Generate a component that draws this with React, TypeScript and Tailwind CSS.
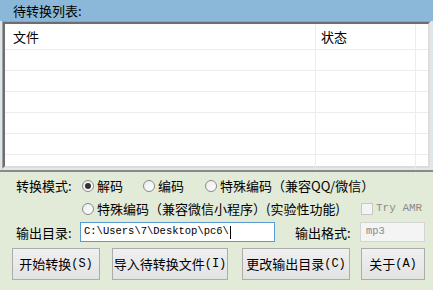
import React from "react";

const cjk = { fontFamily: '"Noto Sans CJK SC", "Noto Sans", sans-serif' };
const mono = { fontFamily: '"Liberation Mono", "DejaVu Sans Mono", monospace' };

function Radio({ checked, label }: { checked?: boolean; label: string }) {
  return (
    <div className="flex items-center gap-[3px] whitespace-nowrap">
      <span className="flex h-[12px] w-[12px] items-center justify-center rounded-full border border-[#8a8a8a] bg-gradient-to-br from-[#ececec] to-white">
        {checked && <span className="h-[6px] w-[6px] rounded-full bg-[#333]" />}
      </span>
      <span className="text-[13px] leading-none text-black">{label}</span>
    </div>
  );
}

function Btn({ children, w }: { children: React.ReactNode; w: string }) {
  return (
    <div
      className={`flex h-[32px] items-center justify-center whitespace-nowrap border border-[#acacac] bg-gradient-to-b from-[#f0f0f0] to-[#e3e3e3] text-[13px] text-black ${w}`}
    >
      {children}
    </div>
  );
}

function Key({ k }: { k: string }) {
  return (
    <span className="text-[12px]" style={mono}>
      ({k})
    </span>
  );
}

export default function App() {
  const rows = [0, 1, 2, 3, 4, 5];
  return (
    <div className="flex h-[290px] w-[433px] flex-col overflow-hidden bg-[#e2ead8]" style={cjk}>
      <div className="flex h-[21px] items-center bg-[#8bb8d8] pl-[13px] text-[13px] text-black">
        待转换列表:
      </div>
      <div className="h-[149px] bg-[#dde6ea] px-[2px] pb-[1px]">
        <div className="h-full border border-[#a0a0a0] border-b-[#e8e8e8] border-r-[#e8e8e8]">
          <div className="flex h-full flex-col border-2 border-[#6e6e6e] border-b-[#dcdcdc] border-r-[#dcdcdc] bg-white">
            <div className="flex h-[25px] shrink-0 text-[13px]">
              <div className="flex w-[310px] items-center pl-[8px] pt-[1px]">文件</div>
              <div className="flex w-[100px] items-center border-l border-[#ececec] pl-[5px] pt-[1px]">状态</div>
              <div className="flex-1 border-l border-[#ececec]" />
            </div>
            {rows.map((r) => (
              <div key={r} className="flex h-[21px] shrink-0 border-t border-[#ececec]">
                <div className="w-[310px]" />
                <div className="w-[100px] border-l border-[#ececec]" />
                <div className="flex-1 border-l border-[#ececec]" />
              </div>
            ))}
          </div>
        </div>
      </div>
      <div className="flex flex-1 flex-col border-t-2 border-[#8a8a8a] pl-[16px] pt-[5px]">
        <div className="flex h-[17px] items-center">
          <span className="w-[66px] whitespace-nowrap text-[13px] leading-none">转换模式:</span>
          <div className="w-[61px]">
            <Radio checked label="解码" />
          </div>
          <div className="w-[62px]">
            <Radio label="编码" />
          </div>
          <Radio label="特殊编码（兼容QQ/微信）" />
        </div>
        <div className="mt-[6px] flex h-[17px] items-center">
          <div className="ml-[66px] w-[279px]">
            <Radio label="特殊编码（兼容微信小程序）(实验性功能)" />
          </div>
          <div className="flex items-center gap-[3px]">
            <span className="h-[12px] w-[12px] border border-[#c6c6c6] bg-[#f4f4f4]" />
            <span className="whitespace-nowrap text-[11px] text-[#8a8a8a]" style={mono}>
              Try AMR
            </span>
          </div>
        </div>
        <div className="mt-[5px] flex h-[20px] items-center">
          <span className="w-[64px] whitespace-nowrap text-[13px] leading-none">输出目录:</span>
          <div className="flex h-[20px] w-[195px] items-center border border-[#5b9bd5] bg-white pl-[3px] text-[10.5px] text-black" style={mono}>
            C:\Users\7\Desktop\pc6\<span className="ml-px h-[13px] w-px bg-black" />
          </div>
          <span className="ml-[20px] w-[65px] whitespace-nowrap text-[13px] leading-none">输出格式:</span>
          <div className="flex h-[20px] w-[65px] items-center border border-[#d4d4d4] bg-[#f4f4f4] pl-[5px] text-[10.5px] text-[#8a8a8a]" style={mono}>
            mp3
          </div>
        </div>
        <div className="ml-[-4px] mt-[6px] flex">
          <Btn w="w-[88px]">
            开始转换<Key k="S" />
          </Btn>
          <div className="w-[12px]" />
          <Btn w="w-[116px]">
            导入待转换文件<Key k="I" />
          </Btn>
          <div className="w-[14px]" />
          <Btn w="w-[108px]">
            更改输出目录<Key k="C" />
          </Btn>
          <div className="w-[11px]" />
          <Btn w="w-[64px]">
            关于<Key k="A" />
          </Btn>
        </div>
      </div>
    </div>
  );
}
